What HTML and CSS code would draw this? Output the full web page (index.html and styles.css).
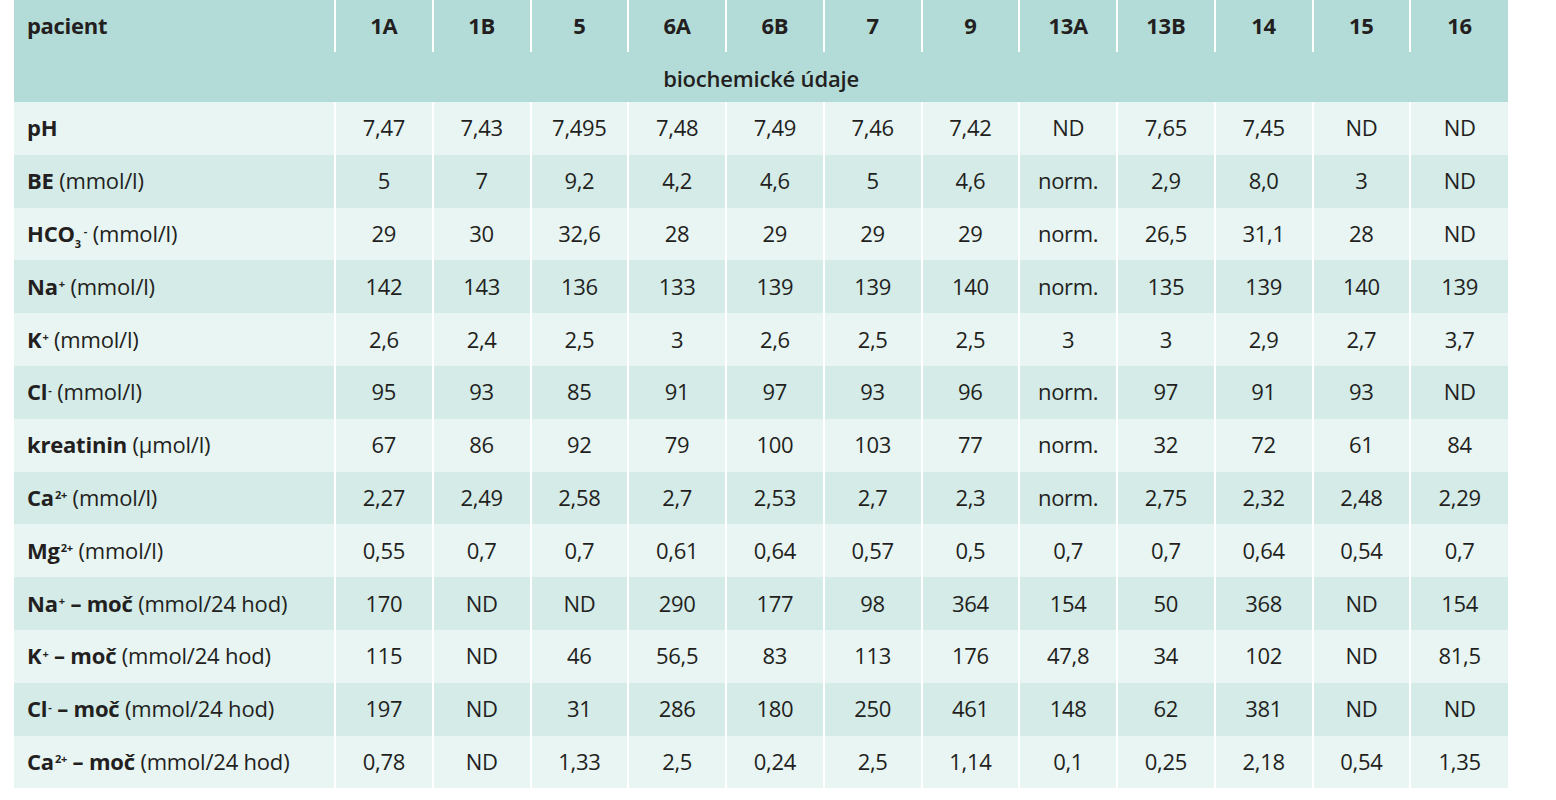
FILE: index.html
```html
<!DOCTYPE html>
<html lang="cs">
<head>
<meta charset="utf-8">
<title>Biochemické údaje</title>
<link rel="stylesheet" href="styles.css">
</head>
<body>
<table class="data">
  <colgroup>
    <col class="c-label">
    <col span="12" class="c-val">
  </colgroup>
  <thead>
    <tr class="head">
      <th class="lbl">pacient</th>
      <th>1A</th><th>1B</th><th>5</th><th>6A</th><th>6B</th><th>7</th><th>9</th><th>13A</th><th>13B</th><th>14</th><th>15</th><th>16</th>
    </tr>
    <tr class="sub">
      <th colspan="13">biochemické údaje</th>
    </tr>
  </thead>
  <tbody>
    <tr><td class="lbl"><b>pH</b></td><td>7,47</td><td>7,43</td><td>7,495</td><td>7,48</td><td>7,49</td><td>7,46</td><td>7,42</td><td>ND</td><td>7,65</td><td>7,45</td><td>ND</td><td>ND</td></tr>
    <tr><td class="lbl"><b>BE</b> (mmol/l)</td><td>5</td><td>7</td><td>9,2</td><td>4,2</td><td>4,6</td><td>5</td><td>4,6</td><td>norm.</td><td>2,9</td><td>8,0</td><td>3</td><td>ND</td></tr>
    <tr><td class="lbl"><b>HCO<sub>3</sub><sup class="m">-</sup></b> (mmol/l)</td><td>29</td><td>30</td><td>32,6</td><td>28</td><td>29</td><td>29</td><td>29</td><td>norm.</td><td>26,5</td><td>31,1</td><td>28</td><td>ND</td></tr>
    <tr><td class="lbl"><b>Na<sup>+</sup></b> (mmol/l)</td><td>142</td><td>143</td><td>136</td><td>133</td><td>139</td><td>139</td><td>140</td><td>norm.</td><td>135</td><td>139</td><td>140</td><td>139</td></tr>
    <tr><td class="lbl"><b>K<sup>+</sup></b> (mmol/l)</td><td>2,6</td><td>2,4</td><td>2,5</td><td>3</td><td>2,6</td><td>2,5</td><td>2,5</td><td>3</td><td>3</td><td>2,9</td><td>2,7</td><td>3,7</td></tr>
    <tr><td class="lbl"><b>Cl<sup>-</sup></b> (mmol/l)</td><td>95</td><td>93</td><td>85</td><td>91</td><td>97</td><td>93</td><td>96</td><td>norm.</td><td>97</td><td>91</td><td>93</td><td>ND</td></tr>
    <tr><td class="lbl"><b>kreatinin</b> (µmol/l)</td><td>67</td><td>86</td><td>92</td><td>79</td><td>100</td><td>103</td><td>77</td><td>norm.</td><td>32</td><td>72</td><td>61</td><td>84</td></tr>
    <tr><td class="lbl"><b>Ca<sup>2+</sup></b> (mmol/l)</td><td>2,27</td><td>2,49</td><td>2,58</td><td>2,7</td><td>2,53</td><td>2,7</td><td>2,3</td><td>norm.</td><td>2,75</td><td>2,32</td><td>2,48</td><td>2,29</td></tr>
    <tr><td class="lbl"><b>Mg<sup>2+</sup></b> (mmol/l)</td><td>0,55</td><td>0,7</td><td>0,7</td><td>0,61</td><td>0,64</td><td>0,57</td><td>0,5</td><td>0,7</td><td>0,7</td><td>0,64</td><td>0,54</td><td>0,7</td></tr>
    <tr><td class="lbl"><b>Na<sup>+</sup> – moč</b> (mmol/24 hod)</td><td>170</td><td>ND</td><td>ND</td><td>290</td><td>177</td><td>98</td><td>364</td><td>154</td><td>50</td><td>368</td><td>ND</td><td>154</td></tr>
    <tr><td class="lbl"><b>K<sup>+</sup> – moč</b> (mmol/24 hod)</td><td>115</td><td>ND</td><td>46</td><td>56,5</td><td>83</td><td>113</td><td>176</td><td>47,8</td><td>34</td><td>102</td><td>ND</td><td>81,5</td></tr>
    <tr><td class="lbl"><b>Cl<sup>-</sup> – moč</b> (mmol/24 hod)</td><td>197</td><td>ND</td><td>31</td><td>286</td><td>180</td><td>250</td><td>461</td><td>148</td><td>62</td><td>381</td><td>ND</td><td>ND</td></tr>
    <tr><td class="lbl"><b>Ca<sup>2+</sup> – moč</b> (mmol/24 hod)</td><td>0,78</td><td>ND</td><td>1,33</td><td>2,5</td><td>0,24</td><td>2,5</td><td>1,14</td><td>0,1</td><td>0,25</td><td>2,18</td><td>0,54</td><td>1,35</td></tr>
  </tbody>
</table>
</body>
</html>
```

FILE: styles.css
```css
html, body {
  margin: 0;
  padding: 0;
  background: #ffffff;
}

body {
  padding-left: 14px;
  font-family: "Open Sans", Lato, "Liberation Sans", sans-serif;
  font-size: 22px;
  color: #231f20;
}

.data {
  border-collapse: collapse;
  border-spacing: 0;
  width: 1494px;
  table-layout: fixed;
}

.c-label {
  width: 321px;
}

.data th,
.data td {
  padding: 0 0 2px;
  text-align: center;
  vertical-align: middle;
  white-space: nowrap;
  line-height: 1;
}

.data th + th,
.data td + td {
  border-left: 2px solid #ffffff;
}

.data .lbl {
  text-align: left;
  padding-left: 13px;
}

.head {
  height: 52px;
}

.head th {
  background: #b3dcd9;
  font-weight: 700;
  letter-spacing: -0.3px;
}

.sub {
  height: 50px;
}

.sub th {
  background: #b3dcd9;
  font-weight: 600;
  letter-spacing: -0.2px;
  padding: 1px 0 0;
}

tbody tr {
  height: 52.8px;
}

tbody tr:nth-child(odd) td {
  background: #e8f5f3;
}

tbody tr:nth-child(even) td {
  background: #d4ebe8;
}

.data td.lbl {
  letter-spacing: -0.2px;
}

.data b {
  font-weight: 700;
}

.data td:not(.lbl) {
  font-weight: 400;
  letter-spacing: -0.3px;
}

sup {
  font-size: 0.5em;
  vertical-align: 0.6em;
  line-height: 0;
  margin-left: 1px;
}

sub {
  font-size: 0.5em;
  vertical-align: -0.5em;
  line-height: 0;
}

sup.m {
  margin-left: 3px;
}
```
